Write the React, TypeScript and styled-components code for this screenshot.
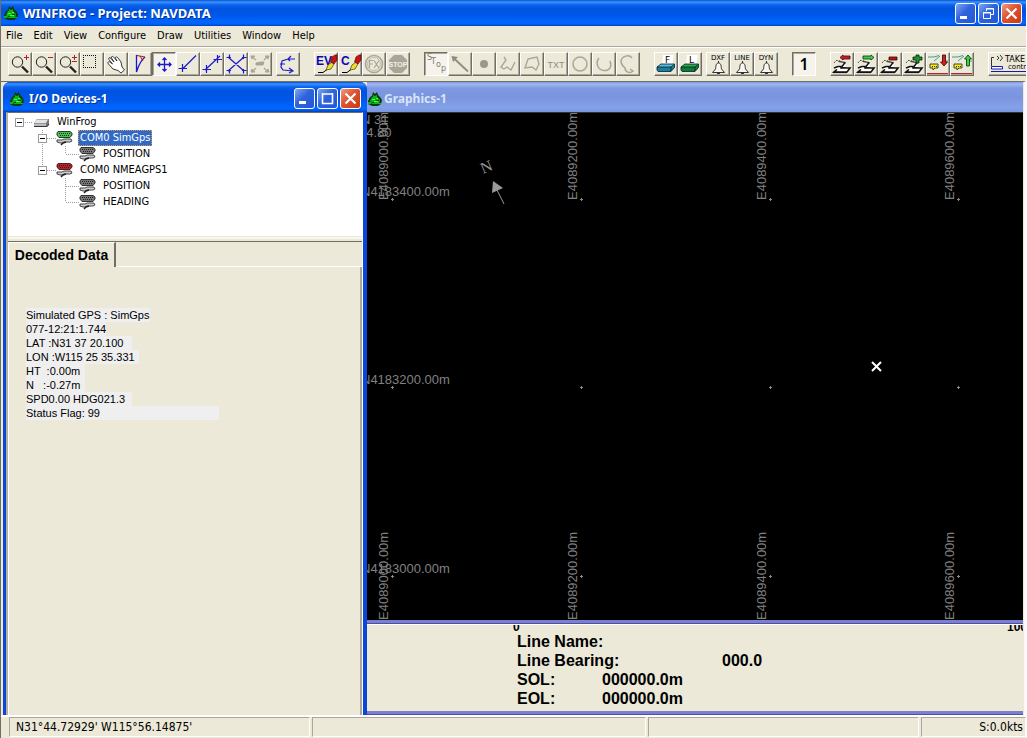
import React from "react";
import styled, { createGlobalStyle, css } from "styled-components";

const face = "#ece9d8";
const shade = "#aca899";
const dark = "#716f64";
const ui = '"DejaVu Sans Condensed", "DejaVu Sans", sans-serif';
const arial = '"Liberation Sans", Arial, sans-serif';
const caption = '"Noto Sans", "Open Sans", sans-serif';
const tiny = '"DejaVu Sans", sans-serif';

const Global = createGlobalStyle`
  * { box-sizing: border-box; }
  body { margin: 0; background: ${face}; overflow: hidden; }
  button { font: inherit; color: inherit; padding: 0; margin: 0; border: 0; background: none; }
  ul, dl, dd, p, h1, h2 { margin: 0; padding: 0; list-style: none; }
`;

const Page = styled.div`
  display: flex;
  flex-direction: column;
  height: 100vh;
  min-height: 600px;
  overflow: hidden;
  background: ${face};
  color: #000;
  font: 11px/14px ${ui};
  border-left: 1px solid ${dark};
  border-right: 1px solid #fff;
`;

const TitleBar = styled.header<{ $kind?: "main" | "child" | "inactive" }>`
  display: flex;
  align-items: center;
  gap: ${(p) => (p.$kind === "inactive" ? 1 : 4)}px;
  flex: none;
  height: ${(p) => (p.$kind === "main" ? 26 : 30)}px;
  padding: ${(p) => (p.$kind === "main" ? "0 4px 0 2px" : p.$kind === "child" ? "3px 6px 0 6px" : "4px 4px 0 0")};
  color: #fff;
  background: linear-gradient(#0a4fd0 0, #3a93ff 2px, #0a62ec 5px, #0053dd 9px, #0058ea 60%, #0066ff 85%, #0062f5 92%, #0040c0 100%);
  ${(p) =>
    p.$kind === "child" &&
    css`
      border-radius: 7px 7px 0 0;
    `}
  ${(p) =>
    p.$kind === "inactive" &&
    css`
      color: #d8e4f8;
      background: linear-gradient(#7a96df 0, #a0b8f2 2px, #7f9ae2 6px, #7a94dd 50%, #84a2e8 85%, #7a96e0 100%);
    `}
`;

const Caption = styled.h1`
  flex: 1;
  font: bold 13px/16px ${caption};
  white-space: nowrap;
  text-shadow: 1px 1px 0 rgba(0, 20, 90, 0.6);
`;

const SubCaption = styled.h2<{ $soft?: boolean }>`
  flex: 1;
  font: bold 12px/16px ${caption};
  white-space: nowrap;
  text-shadow: ${(p) => (p.$soft ? "none" : "1px 1px 0 rgba(0, 20, 90, 0.6)")};
`;

const WindowButtons = styled.div`
  display: flex;
  gap: 2px;
`;

const WindowButton = styled.button<{ $close?: boolean }>`
  width: 21px;
  height: 21px;
  border: 1px solid #fff;
  border-radius: 3px;
  background: ${(p) =>
    p.$close
      ? "linear-gradient(135deg, #ee9b80, #df5230 45%, #c53a12)"
      : "linear-gradient(135deg, #7fa5f2, #2f63dc 45%, #2258d8)"};
  svg { display: block; }
`;

const MenuBar = styled.nav`
  display: flex;
  flex: none;
  gap: 11px;
  height: 21px;
  padding: 3px 5px 0;
  border-bottom: 1px solid ${shade};
`;

const MenuItem = styled.button`
  height: 14px;
  line-height: 14px;
`;

const ToolBar = styled.div`
  display: flex;
  flex: none;
  gap: 14px;
  height: 34px;
  padding: 4px 0 0 7px;
  overflow: hidden;
  border-top: 1px solid #fff;
`;

const ToolGroup = styled.div`
  display: flex;
  flex: none;
`;

const ToolCluster = styled.div`
  display: flex;
  flex: none;
  gap: 4px;
`;

const Tool = styled.button<{ $pressed?: boolean; $wide?: boolean }>`
  flex: none;
  width: ${(p) => (p.$wide ? 48 : 24)}px;
  height: 24px;
  border: 1px solid;
  border-color: ${(p) => (p.$pressed ? `${dark} #fff #fff ${dark}` : `#fff ${dark} ${dark} #fff`)};
  background: ${(p) => (p.$pressed ? "#f5f3ec" : face)};
  box-shadow: ${(p) => (p.$pressed ? `inset 1px 1px 0 ${shade}` : `inset -1px -1px 0 ${shade}`)};
  svg { display: block; margin: -1px; overflow: hidden; }
`;

const Workspace = styled.main`
  display: flex;
  flex: 1;
  min-height: 0;
  padding: 0 1px 0 2px;
  background: ${face};
  border-top: 1px solid ${dark};
  border-right: 2px solid #fbfaf6;
`;

const DeviceWindow = styled.section`
  display: flex;
  flex-direction: column;
  flex: 0 0 364px;
  background: #0a46d8;
  border-radius: 7px 7px 0 0;
`;

const DeviceBody = styled.div`
  display: flex;
  flex: 1;
  min-height: 0;
  flex-direction: column;
  margin: 0 4px 0 3px;
  border-left: 2px solid #b4b1a4;
  border-right: 1px solid #fff;
  border-top: 1px solid ${dark};
  background: ${face};
`;

const Tree = styled.ul`
  flex: none;
  height: 124px;
  padding-top: 1px;
  background: #fff;
  border-bottom: 1px solid ${face};
`;

const TreeRow = styled.li`
  display: flex;
  align-items: center;
  height: 16px;
  svg { flex: none; }
`;

const TreeLabel = styled.span<{ $selected?: boolean }>`
  margin-left: 5px;
  padding: 0 1px;
  line-height: 14px;
  white-space: nowrap;
  border: 1px dotted transparent;
  ${(p) =>
    p.$selected &&
    css`
      color: #fff;
      background: #316ac5;
      border-color: #d09a50;
    `}
`;

const Splitter = styled.div`
  flex: none;
  height: 5px;
  border-top: 2px solid #f8f7f1;
  border-bottom: 1px solid ${dark};
`;

const TabStrip = styled.div`
  display: flex;
  flex: none;
  height: 25px;
`;

const Tab = styled.button`
  width: 108px;
  border-top: 1px solid #fff;
  border-right: 2px solid ${dark};
  border-left: 1px solid #fff;
  font: bold 14px/22px ${arial};
`;

const TabFill = styled.div`
  flex: 1;
  border-bottom: 1px solid #fff;
`;

const TabPage = styled.div`
  flex: 1;
  min-height: 0;
  padding: 41px 0 0 17px;
  border-left: 1px solid #fff;
  border-right: 2px solid ${shade};
  font: 11px/14px ${arial};
`;

const DataLine = styled.p<{ $w: number }>`
  width: ${(p) => p.$w}px;
  height: 14px;
  white-space: pre;
  background: #efefef;
`;

const GraphicsWindow = styled.section`
  display: flex;
  flex-direction: column;
  flex: 1;
  min-width: 0;
`;

const Plot = styled.svg`
  display: block;
  flex: 1;
  min-height: 0;
  width: 100%;
  background: #000;
  border-top: 1px solid #333;
`;

const GridLabel = styled.text`
  font: 13px ${arial};
  fill: #808080;
`;

const Rail = styled.div`
  flex: none;
  height: 4px;
  background: #7b7fd0;
  border-bottom: 1px solid #4d50a0;
`;

const LinePanel = styled.div`
  flex: none;
  height: 87px;
  padding: 0 0 0 150px;
  border-top: 1px solid #fff;
  font: bold 16px/19px ${arial};
`;

const ScaleRow = styled.div`
  display: flex;
  justify-content: space-between;
  align-items: flex-end;
  height: 7px;
  margin-left: -4px;
  overflow: hidden;
  font: bold 12px/9px ${arial};
`;

const ScaleEnd = styled.span`
  width: 16px;
`;

const Field = styled.div<{ $label: number }>`
  display: grid;
  grid-template-columns: ${(p) => p.$label}px auto;
  height: 19px;
  white-space: nowrap;
`;

const StatusBar = styled.footer`
  display: grid;
  grid-template-columns: 301px 334px 271px 1fr;
  gap: 2px;
  flex: none;
  height: 23px;
  padding: 0 0 2px 8px;
  border-top: 2px solid #fff;
  font-size: 12px;
`;

const Pane = styled.div<{ $right?: boolean }>`
  padding: 0 6px;
  padding-right: ${(p) => (p.$right ? 2 : 6)}px;
  text-align: ${(p) => (p.$right ? "right" : "left")};
  line-height: 18px;
  white-space: nowrap;
  border: 1px solid;
  border-color: ${shade} #fff #fff ${shade};
`;

const blue = "#1a1acc";
const gray = "#aaa697";

function Frog() {
  return (
    <svg width="16" height="16" viewBox="0 0 16 16" aria-hidden="true">
      <path d="M1 10 L3 6 L5 5 L6 1 L8 3 L10 1 L11 4 L13 6 L15 9 L14 13 L11 15 H5 L1 13 Z" fill="#063c0c" />
      <path d="M3 10 L5 6 H10 L13 9 L12 13 H5 Z" fill="#00b81c" />
      <path d="M6 4 L8 5 L10 4 V6 H6 Z M1 11 H4 V13 H1 Z M10 12 H14 V13 H10 Z" fill="#25a32a" />
      <path d="M5 8.5 H8 M9 7.5 H11 M7 10.5 H11" stroke="#5af04c" />
      <path d="M5 11.5 H7 M9 9.5 H12" stroke="#06460c" />
    </svg>
  );
}

type Glyph = "min" | "max" | "restore" | "close";
function WinGlyph({ kind }: { kind: Glyph }) {
  return (
    <svg width="19" height="19" viewBox="0 0 19 19" stroke="#fff" fill="none" aria-hidden="true">
      {kind === "min" && <path d="M4 13.5 H11" strokeWidth="3" />}
      {kind === "max" && <path d="M4.5 4 V14.5 H14.5 V4 M4 5 H15" strokeWidth="1.6" />}
      {kind === "restore" && <path d="M7.5 7 V4.5 H14.5 V10.5 H12 M7 5 H15 M4.5 8.5 H11.5 V14.5 H4.5 Z M4 9 H12" />}
      {kind === "close" && <path d="M4.5 4.5 L14.5 14.5 M14.5 4.5 L4.5 14.5" strokeWidth="2.2" />}
    </svg>
  );
}

function Controls({ kinds }: { kinds: Glyph[] }) {
  return (
    <WindowButtons>
      {kinds.map((k) => (
        <WindowButton key={k} $close={k === "close"} aria-label={k}>
          <WinGlyph kind={k} />
        </WindowButton>
      ))}
    </WindowButtons>
  );
}

const lens = (
  <g fill="none" stroke="#222">
    <circle cx="9.5" cy="10" r="5.2" />
    <path d="M14 14.5 L20 20.5" strokeWidth="2.4" />
  </g>
);

const pen = (
  <g>
    <path d="M4 20.5 H9 L13 17.5" stroke="#000" fill="none" />
    <path d="M12 18 L14 13 L18 10 L20 12 L17 17 Z" fill="#f2e21c" stroke="#333" strokeWidth="0.7" />
    <path d="M16.5 10 L18 5 L21 3 H23 V8 L20 12 Z" fill="#c81414" stroke="#400" strokeWidth="0.6" />
  </g>
);

const bell = (
  <path
    d="M12.5 9 V11 M9.5 17 C10 15 9.5 11 12.5 11 C15.5 11 15 15 15.5 17 L18.5 20.5 H6.5 Z M11 21.5 H14"
    fill="#f6f5ee"
    stroke="#333"
  />
);

function printer(front: string, lid: string, letter: string) {
  return (
    <g>
      <path d="M9 3 H20 L18 13 H8 Z" fill="#fff" />
      <path d="M3 15 L7 12 H20 L17 15 Z" fill={lid} />
      <path d="M3 15 H17 V19.5 H4 L3 18 Z" fill={front} />
      <path d="M17 15 L20.5 12 V15.5 L17 19.5 Z" fill={front} />
      <path d="M3 15 L7 12 H20.5 V15.5 L17 19.5 H4 L3 18 Z M17 15 V19 M3 15 H17 L20 12.5" fill="none" stroke="#022" strokeWidth="0.8" />
      <text x="11" y="11" fontSize="9" fontFamily={tiny}>{letter}</text>
    </g>
  );
}

function scope(mark: React.ReactNode) {
  return (
    <g>
      <path d="M4 11 L6 8.5 H9 L12 10" stroke="#555" fill="none" strokeDasharray="2 1" />
      <path d="M8.5 9.5 L15 10.5 L13.5 14.5" stroke="#222" fill="none" strokeWidth="1.2" />
      <path d="M15 10.5 L11 16 H16" stroke="#111" fill="#fff" strokeWidth="1.4" />
      <path d="M4 16 L8 14.5 H11 V16 H20 L17 20 H4 L7 17.5" stroke="#111" fill="#fff" strokeWidth="1.6" />
      <path d="M3 20.5 H17" stroke="#111" strokeWidth="1.2" />
      {mark}
    </g>
  );
}

function tow(mark: React.ReactNode) {
  return (
    <g>
      <path d="M2 5 H8 L13 3.5 M8 9 L14 4 M16 9 H22" stroke="#3f9c9c" fill="none" />
      <path d="M4 12 H12 V16 H9 L7 18 V16 H4 Z" fill="#f8ec10" stroke="#333" strokeWidth="0.9" />
      <path d="M6 14.5 H11" stroke="#333" strokeDasharray="1 1" />
      <path d="M1 21.5 H22" stroke="#c02020" />
      {mark}
    </g>
  );
}

const icons: Record<string, React.ReactNode> = {
  "Zoom in": <g>{lens}<path d="M18.5 3 V8 M16 5.5 H21" stroke="#b02020" /></g>,
  "Zoom out": <g>{lens}<path d="M16 5.5 H21" stroke="#b02020" /></g>,
  "Zoom scale": <g>{lens}<path d="M18.5 3 V8 M16 5.5 H21 M16 9.5 H21" stroke="#b02020" /></g>,
  "Zoom window": <path d="M3 3.5 H16 M3 15.5 H16 M3.5 3 V16 M15.5 3 V16" stroke="#111" fill="none" strokeDasharray="1 1" />,
  Pan: (
    <path
      d="M9 17 L4.5 12 C3 10 5 9 6.5 10.5 L8.5 12 L5 7.5 C4 5.5 6 5 7 6.5 L10 10 L7.5 6 C7 4 9 4 10 5.5 L13 9 L11.5 6.5 C11 4.5 13 4.5 14 6 L17 10 L18 15 L20.5 18 L17 21 L14 18.5 Z"
      fill="#fff" stroke="#222" strokeWidth="0.9"
    />
  ),
  "Range bearing": <g fill="none"><path d="M8.5 3 V20 C10 15 12 9 17 5" stroke={blue} strokeWidth="1.3" /><path d="M9 3.5 L17 5 M12 4 L15 9" stroke="#b02020" /></g>,
  Move: <path d="M12.5 6 V19 M6 12.5 H19 M10.5 8 L12.5 6 L14.5 8 M10.5 17 L12.5 19 L14.5 17 M8 10.5 L6 12.5 L8 14.5 M17 10.5 L19 12.5 L17 14.5" stroke={blue} fill="none" strokeWidth="1.3" />,
  "Line from point": <path d="M20 3.5 L6 17.5 M6.5 12 V20 M2.5 16.5 H11" stroke={blue} strokeWidth="1.2" />,
  "Line two points": <path d="M5 18 L20 4 M6.5 13 V21 M2.5 17.5 H11 M17.5 3 V11 M13.5 7.5 H22" stroke={blue} strokeWidth="1.2" />,
  Intersect: <path d="M4 5 L20 19 M20 5 L4 19 M5.5 2.5 V7 M2.5 5.5 H7 M19.5 2.5 V7 M18 5.5 H22.5 M5.5 17 V21.5 M2.5 18.5 H7 M19.5 17 V21.5 M18 18.5 H22.5" stroke={blue} strokeWidth="1.2" />,
  Shrink: <g stroke={gray} fill={gray}><path d="M3 4 L8 8 M20 4 L16 8 M4 20 L8 16 M20 20 L16 16" strokeWidth="1.3" /><path d="M3 4 H7 L4 7 Z M21 4 H17 L20 7 Z M3 20 H7 L4 17 Z M21 20 H17 L20 17 Z M8 11 L13 10 H16 L15 13 H8 Z" /></g>,
  "Survey line": <path d="M19 7 L12 7 L6 9 L5 15 L7 18 L17 19 M15 4 L12 7 L14 9 M4 12 H9 M13 16 L17 19 L13 21" stroke={blue} fill="none" strokeWidth="1.2" />,
  Event: <g><text x="2" y="13" fontSize="12" fontWeight="bold" fontFamily={arial} fill="#0a0ab4">EV</text>{pen}</g>,
  Comment: <g><text x="3" y="13" fontSize="12" fontWeight="bold" fontFamily={arial} fill="#0a0ab4">C</text>{pen}</g>,
  "Fix off": <g fill="none" stroke={gray}><circle cx="12" cy="12" r="8.5" strokeWidth="1.6" /><circle cx="12" cy="12" r="6.5" strokeWidth="0.7" /><path d="M7.5 16 V8.5 H11.5 M7.5 12 H11 M12 8.5 L17 16 M17 8.5 L12 16" strokeWidth="1.2" /></g>,
  "Stop off": <g><path d="M8 3 H16 L21 8 V16 L16 21 H8 L3 16 V8 Z" fill={gray} /><text x="12" y="15" textAnchor="middle" fontSize="7" fontWeight="bold" fontFamily={arial} fill="#f4f2e8">STOP</text></g>,
  "Draw stop": <g fontSize="8" fontFamily={tiny} fill="#807d70"><text x="3" y="8">S</text><text x="7" y="12">T</text><text x="12" y="15">o</text><text x="17" y="19">p</text></g>,
  "Draw arrow": <g><path d="M5 5.5 L20 19.5" stroke="#8f8c7e" strokeWidth="1.8" /><path d="M3.5 4 L10 5 L5 10 Z" fill="#8f8c7e" /></g>,
  "Draw point": <circle cx="12" cy="12" r="4" fill="#9b9789" />,
  "Draw polyline": <path d="M8 5 L10 8 L5 15 L8 17 L11 15 L15 18 L19 10" stroke={gray} fill="none" strokeWidth="1.4" />,
  "Draw polygon": <path d="M8 7 L17 5 L19 12 L16 18 L12 15 L5 16 Z" stroke={gray} fill="none" strokeWidth="1.4" />,
  "Draw text": <text x="12" y="16" textAnchor="middle" fontSize="9" fontFamily={arial} fill="#8f8c7e">TXT</text>,
  "Draw circle": <circle cx="12" cy="12" r="7" stroke={gray} fill="none" strokeWidth="1.5" />,
  "Draw arc": <path d="M7 6 C3 11 6 18 12 18.5 C18 19 20 14 18 9" stroke={gray} fill="none" strokeWidth="1.5" />,
  "Draw curve": <path d="M16 6 C13 2 6 4 5 9 C5 13 8 15 9 16 C9 20 14 22 17 19 L14 17" stroke={gray} fill="none" strokeWidth="1.5" />,
  "Print F": printer("#1c7c9c", "#58b8e8", "F"),
  "Print L": printer("#0e7a34", "#2fa84e", "L"),
  DXF: <g><text x="12" y="8" textAnchor="middle" fontSize="7" fontFamily={tiny}>DXF</text>{bell}</g>,
  LINE: <g><text x="12" y="8" textAnchor="middle" fontSize="7" fontFamily={tiny}>LINE</text>{bell}</g>,
  DYN: <g><text x="12" y="8" textAnchor="middle" fontSize="7" fontFamily={tiny}>DYN</text>{bell}</g>,
  Vessel: <text x="12" y="18" textAnchor="middle" fontSize="16" fontFamily={caption} fontWeight="600">1</text>,
  "Scope left": scope(<path d="M10 5.5 L13 3 V4 H20 V7 H13 V8 Z" fill="#d02020" stroke="#400" strokeWidth="0.8" />),
  "Scope right": scope(<path d="M20 5.5 L17 3 V4 H9 V7 H17 V8 Z" fill="#40d048" stroke="#030" strokeWidth="0.8" />),
  "Scope remove": scope(<path d="M11 5 H19 V8 H11 Z" fill="#b01818" stroke="#400" strokeWidth="0.8" />),
  "Scope add": scope(<path d="M14 3 H17 V5 H20 V8 H17 V11 H14 V8 H11 V5 H14 Z" fill="#209030" stroke="#020" strokeWidth="0.8" />),
  "Tow down": tow(<path d="M18 14 L14.5 10 H16.5 V3 H19.5 V10 H21.5 Z" fill="#d02020" stroke="#400" strokeWidth="0.8" />),
  "Tow up": tow(<path d="M18 3 L14.5 7 H16.5 V14 H19.5 V7 H21.5 Z" fill="#40d048" stroke="#030" strokeWidth="0.8" />),
};

function Group({ names, pressed }: { names: string[]; pressed?: string }) {
  return (
    <ToolGroup>
      {names.map((n) => (
        <Tool key={n} $pressed={n === pressed} aria-label={n} title={n}>
          <svg width="24" height="24" viewBox="0 0 24 24">{icons[n]}</svg>
        </Tool>
      ))}
    </ToolGroup>
  );
}

function Expander({ x }: { x: number }) {
  return (
    <g>
      <rect x={x + 0.5} y="4.5" width="8" height="8" fill="#fff" stroke="#999" />
      <path d={`M${x + 2} 8.5 H${x + 7}`} stroke="#000" />
    </g>
  );
}

function Drive() {
  return (
    <svg width="17" height="16" viewBox="0 0 17 16">
      <path d="M1 9 L4 5 H16 V11 L14 13 H1 Z" fill="#777" />
      <path d="M1 9 L4 5.5 H15 L13 9 Z" fill="#e4e4e4" />
      <path d="M1 9.5 H13 V12 H1 Z" fill="#bbb" />
      <path d="M1 12.5 H14 L16 10" stroke="#333" fill="none" />
    </svg>
  );
}

function Port({ color }: { color: string }) {
  return (
    <svg width="17" height="16" viewBox="0 0 17 16">
      <path d="M2 1.5 H14 L16 3 V5 L14 7.5 H3 L1 5 V3 Z" fill={color} stroke="#222" strokeWidth="0.9" />
      <path d="M3 3.5 H14 M4 5.5 H13" stroke="#222" strokeDasharray="1 1" />
      <path d="M1 10 H6 L8 9 H15 L16 11 L14 12 H8 L6 13 H4 L1 12 Z" fill="#ccc" stroke="#333" strokeWidth="0.9" />
      <path d="M5 15 L7 13 L10 12" stroke="#222" strokeWidth="1.5" fill="none" />
    </svg>
  );
}

const tree = [
  { depth: 0, label: "WinFrog", open: true, lines: "M15 8.5 H25" },
  { depth: 1, label: "COM0 SimGps", color: "#3ec84c", open: true, selected: true, lines: "M34.5 0 V16 M39 8.5 H48" },
  { depth: 2, label: "POSITION", color: "#777", lines: "M34.5 0 V16 M57.5 0 V8 M58 8.5 H71" },
  { depth: 1, label: "COM0 NMEAGPS1", color: "#c41c24", open: true, lines: "M34.5 0 V8 M39 8.5 H48" },
  { depth: 2, label: "POSITION", color: "#777", lines: "M57.5 0 V16 M58 8.5 H71" },
  { depth: 2, label: "HEADING", color: "#777", lines: "M57.5 0 V8 M58 8.5 H71" },
];

const decoded: [string, number][] = [
  ["Simulated GPS : SimGps", 124],
  ["077-12:21:1.744", 80],
  ["LAT :N31 37 20.100", 106],
  ["LON :W115 25 35.331", 113],
  ["HT  :0.00m", 59],
  ["N   :-0.27m", 59],
  ["SPD0.00 HDG021.3", 106],
  ["Status Flag: 99", 193],
];

const eastings: [number, string][] = [
  [25, "E4089000.00m"],
  [214, "E4089200.00m"],
  [403, "E4089400.00m"],
  [591, "E4089600.00m"],
];
const northings: [number, string][] = [
  [86, "N4183400.00m"],
  [274, "N4183200.00m"],
  [463, "N4183000.00m"],
];

function Chart() {
  return (
    <Plot role="img" aria-label="Survey plot">
      <GridLabel x="-6" y="11">N 31</GridLabel>
      <GridLabel x="-8" y="24">44.80</GridLabel>
      {northings.map(([y, t]) => (
        <GridLabel key={t} x="-6" y={y - 3}>{t}</GridLabel>
      ))}
      {eastings.map(([x, t]) => (
        <g key={t}>
          <GridLabel transform={`translate(${x - 4} 87) rotate(-90)`}>{t}</GridLabel>
          <GridLabel transform={`translate(${x - 4} 507) rotate(-90)`}>{t}</GridLabel>
          {northings.map(([y]) => (
            <path key={y} d={`M${x - 1} ${y + 0.5} H${x + 2} M${x + 0.5} ${y - 1} V${y + 2}`} stroke="#888" />
          ))}
        </g>
      ))}
      <text transform="translate(116 61) rotate(-22)" fontSize="16" fontFamily='"Liberation Serif", serif' fill="#999">N</text>
      <path d="M130 77 L137 91" stroke="#999" />
      <path d="M126 68 L136 75 L125 80 Z" fill="#999" />
      <path d="M505 249 L514 258 M514 249 L505 258" stroke="#fff" strokeWidth="2" />
    </Plot>
  );
}

export default function App() {
  return (
    <Page>
      <Global />
      <TitleBar $kind="main">
        <Frog />
        <Caption>WINFROG - Project: NAVDATA</Caption>
        <Controls kinds={["min", "restore", "close"]} />
      </TitleBar>
      <MenuBar>
        {["File", "Edit", "View", "Configure", "Draw", "Utilities", "Window", "Help"].map((m) => (
          <MenuItem key={m}>{m}</MenuItem>
        ))}
      </MenuBar>
      <ToolBar>
        <ToolCluster>
          <Group
            names={["Zoom in", "Zoom out", "Zoom scale", "Zoom window", "Pan", "Range bearing", "Move", "Line from point", "Line two points", "Intersect", "Shrink"]}
            pressed="Move"
          />
          <Group names={["Survey line"]} />
        </ToolCluster>
        <Group names={["Event", "Comment", "Fix off", "Stop off"]} />
        <Group
          names={["Draw stop", "Draw arrow", "Draw point", "Draw polyline", "Draw polygon", "Draw text", "Draw circle", "Draw arc", "Draw curve"]}
          pressed="Draw stop"
        />
        <ToolCluster>
          <Group names={["Print F", "Print L"]} />
          <Group names={["DXF", "LINE", "DYN"]} />
        </ToolCluster>
        <Group names={["Vessel"]} pressed="Vessel" />
        <Group names={["Scope left", "Scope right", "Scope remove", "Scope add", "Tow down", "Tow up"]} />
        <Tool $wide aria-label="Take control">
          <svg width="48" height="24" viewBox="0 0 48 24">
            <path d="M3.5 14 V5.5 H6 M9 4 L11 6 L9 8 M12 3 L14.5 6 L12 9" stroke="#333" fill="none" />
            <path d="M3.5 14.5 H14.5 V17 H3.5 Z M3 19.5 H48" stroke="#1818b0" fill="#fff" />
            <text x="17" y="10" fontSize="8" fontFamily={tiny}>TAKE</text>
            <text x="20" y="17" fontSize="7" fontFamily={tiny}>control</text>
          </svg>
        </Tool>
      </ToolBar>
      <Workspace>
        <DeviceWindow>
          <TitleBar $kind="child">
            <Frog />
            <SubCaption>I/O Devices-1</SubCaption>
            <Controls kinds={["min", "max", "close"]} />
          </TitleBar>
          <DeviceBody>
            <Tree>
              {tree.map((n, i) => (
                <TreeRow key={i}>
                  <svg width={25 + n.depth * 23} height="16">
                    <path d={n.lines} stroke="#999" strokeDasharray="1 1" fill="none" />
                    {n.open && <Expander x={7 + n.depth * 23} />}
                  </svg>
                  {n.color ? <Port color={n.color} /> : <Drive />}
                  <TreeLabel $selected={n.selected}>{n.label}</TreeLabel>
                </TreeRow>
              ))}
            </Tree>
            <Splitter />
            <TabStrip>
              <Tab>Decoded Data</Tab>
              <TabFill />
            </TabStrip>
            <TabPage>
              {decoded.map(([t, w]) => (
                <DataLine key={t} $w={w}>{t}</DataLine>
              ))}
            </TabPage>
          </DeviceBody>
        </DeviceWindow>
        <GraphicsWindow>
          <TitleBar $kind="inactive">
            <Frog />
            <SubCaption $soft>Graphics-1</SubCaption>
          </TitleBar>
          <Chart />
          <Rail />
          <LinePanel>
            <ScaleRow>
              <span>0</span>
              <ScaleEnd>100</ScaleEnd>
            </ScaleRow>
            <Field $label={205}><span>Line Name:</span></Field>
            <Field $label={205}><span>Line Bearing:</span><span>000.0</span></Field>
            <Field $label={85}><span>SOL:</span><span>000000.0m</span></Field>
            <Field $label={85}><span>EOL:</span><span>000000.0m</span></Field>
          </LinePanel>
          <Rail />
        </GraphicsWindow>
      </Workspace>
      <StatusBar>
        <Pane>N31°44.72929' W115°56.14875'</Pane>
        <Pane />
        <Pane />
        <Pane $right>S:0.0kts</Pane>
      </StatusBar>
    </Page>
  );
}
